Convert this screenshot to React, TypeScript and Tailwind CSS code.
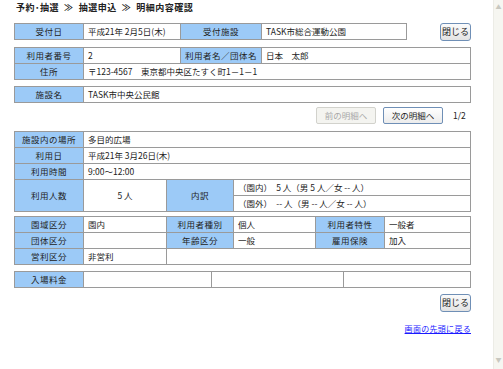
const font = { fontFamily: '"Noto Sans CJK JP", "Noto Sans", sans-serif' };

const th =
  "bg-[#9ccaf7] border border-[#9a9a9a] text-center font-normal text-[#222] h-[16px] p-0 leading-[13px] tracking-[0.5px]";
const td = "bg-white border border-[#9a9a9a] text-left h-[16px] px-[4px] py-0 leading-[13px] text-[#222]";
const tdCenter = "bg-white border border-[#9a9a9a] text-center h-[16px] p-0 leading-[13px] text-[#222]";
const tbl = "table-fixed border-collapse border border-[#8a8a8a] text-[8.5px]";

function CloseButton() {
  return (
    <button className="w-[31px] h-[18px] rounded-[3px] border border-[#6f8fb6] bg-gradient-to-b from-[#fbfbfb] to-[#e3e3e3] text-[9px] leading-[14px] text-[#222]">
      閉じる
    </button>
  );
}

export default function App() {
  return (
    <div className="flex w-[503px] h-[369px] bg-white overflow-hidden" style={font}>
      <div className="w-[493px] h-full pl-[14px]">
        <div className="h-[23px] pt-[1px] pl-[2px] text-[9px] font-bold text-[#222] tracking-[0.5px]">
          予約･抽選 &nbsp;≫&nbsp; 抽選申込 &nbsp;≫&nbsp; 明細内容確認
        </div>

        <div className="flex w-[457px] items-start justify-between">
          <table className={tbl + " w-[393px]"}>
            <colgroup>
              <col className="w-[69px]" />
              <col className="w-[97px]" />
              <col className="w-[81px]" />
              <col />
            </colgroup>
            <tbody>
              <tr>
                <th className={th}>受付日</th>
                <td className={td}>平成21年 2月5日(木)</td>
                <th className={th}>受付施設</th>
                <td className={td}>TASK市総合運動公園</td>
              </tr>
            </tbody>
          </table>
          <CloseButton />
        </div>

        <table className={tbl + " w-[457px] mt-[6px]"}>
          <colgroup>
            <col className="w-[69px]" />
            <col className="w-[97px]" />
            <col className="w-[81px]" />
            <col />
          </colgroup>
          <tbody>
            <tr>
              <th className={th}>利用者番号</th>
              <td className={td}>2</td>
              <th className={th}>利用者名／団体名</th>
              <td className={td}>日本　太郎</td>
            </tr>
            <tr>
              <th className={th}>住所</th>
              <td className={td} colSpan={3}>
                〒123-4567　東京都中央区たすく町1－1－1
              </td>
            </tr>
          </tbody>
        </table>

        <table className={tbl + " w-[457px] mt-[6px]"}>
          <colgroup>
            <col className="w-[69px]" />
            <col />
          </colgroup>
          <tbody>
            <tr>
              <th className={th}>施設名</th>
              <td className={td}>TASK市中央公民館</td>
            </tr>
          </tbody>
        </table>

        <div className="flex w-[457px] items-center justify-end gap-[7px] mt-[4px] h-[17px]">
          <button className="w-[60px] h-[17px] rounded-[2px] border border-[#d2d2cc] bg-[#f4f4f0] text-[8.5px] text-[#a8a8a8]">
            前の明細へ
          </button>
          <button className="w-[60px] h-[17px] rounded-[2px] border border-[#6f8fb6] bg-gradient-to-b from-[#ffffff] to-[#ececec] text-[8.5px] text-[#222]">
            次の明細へ
          </button>
          <span className="w-[18px] ml-[3px] text-[8.5px] text-[#222]">1/2</span>
        </div>

        <table className={tbl + " w-[457px] mt-[7px]"}>
          <colgroup>
            <col className="w-[69px]" />
            <col className="w-[83px]" />
            <col className="w-[67px]" />
            <col />
          </colgroup>
          <tbody>
            <tr>
              <th className={th}>施設内の場所</th>
              <td className={td} colSpan={3}>多目的広場</td>
            </tr>
            <tr>
              <th className={th}>利用日</th>
              <td className={td} colSpan={3}>平成21年 3月26日(木)</td>
            </tr>
            <tr>
              <th className={th}>利用時間</th>
              <td className={td} colSpan={3}>9:00～12:00</td>
            </tr>
            <tr>
              <th className={th} rowSpan={2}>利用人数</th>
              <td className={tdCenter} rowSpan={2}>5 人</td>
              <th className={th} rowSpan={2}>内訳</th>
              <td className={td}>（園内）　5 人（男 5 人／女 -- 人）</td>
            </tr>
            <tr>
              <td className={td}>（園外）　-- 人（男 -- 人／女 -- 人）</td>
            </tr>
          </tbody>
        </table>

        <table className={tbl + " w-[457px] mt-[4px]"}>
          <colgroup>
            <col className="w-[69px]" />
            <col className="w-[83px]" />
            <col className="w-[67px]" />
            <col className="w-[82px]" />
            <col className="w-[69px]" />
            <col />
          </colgroup>
          <tbody>
            <tr>
              <th className={th}>園域区分</th>
              <td className={td}>園内</td>
              <th className={th}>利用者種別</th>
              <td className={td}>個人</td>
              <th className={th}>利用者特性</th>
              <td className={td}>一般者</td>
            </tr>
            <tr>
              <th className={th}>団体区分</th>
              <td className={td}></td>
              <th className={th}>年齢区分</th>
              <td className={td}>一般</td>
              <th className={th}>雇用保険</th>
              <td className={td}>加入</td>
            </tr>
            <tr>
              <th className={th}>営利区分</th>
              <td className={td}>非営利</td>
              <td className={td} colSpan={4}></td>
            </tr>
          </tbody>
        </table>

        <table className={tbl + " w-[457px] mt-[6px]"}>
          <colgroup>
            <col className="w-[69px]" />
            <col className="w-[128px]" />
            <col className="w-[132px]" />
            <col />
          </colgroup>
          <tbody>
            <tr>
              <th className={th}>入場料金</th>
              <td className={td}></td>
              <td className={td}></td>
              <td className={td}></td>
            </tr>
          </tbody>
        </table>

        <div className="flex w-[457px] justify-end mt-[6px]">
          <CloseButton />
        </div>

        <div className="flex w-[457px] justify-end mt-[12px]">
          <a href="#" className="text-[8px] leading-[10px] text-[#1a1aff] underline tracking-[0.3px]">
            画面の先頭に戻る
          </a>
        </div>
      </div>

      <div className="w-[10px] h-full bg-[#f6f6f1] border-l border-[#ececE6] flex flex-col justify-between items-center">
        <span className="text-[6px] leading-[10px] text-[#c8c8c0] mt-[2px]">▲</span>
        <span className="text-[6px] leading-[10px] text-[#c8c8c0] mb-[4px]">▼</span>
      </div>
    </div>
  );
}
